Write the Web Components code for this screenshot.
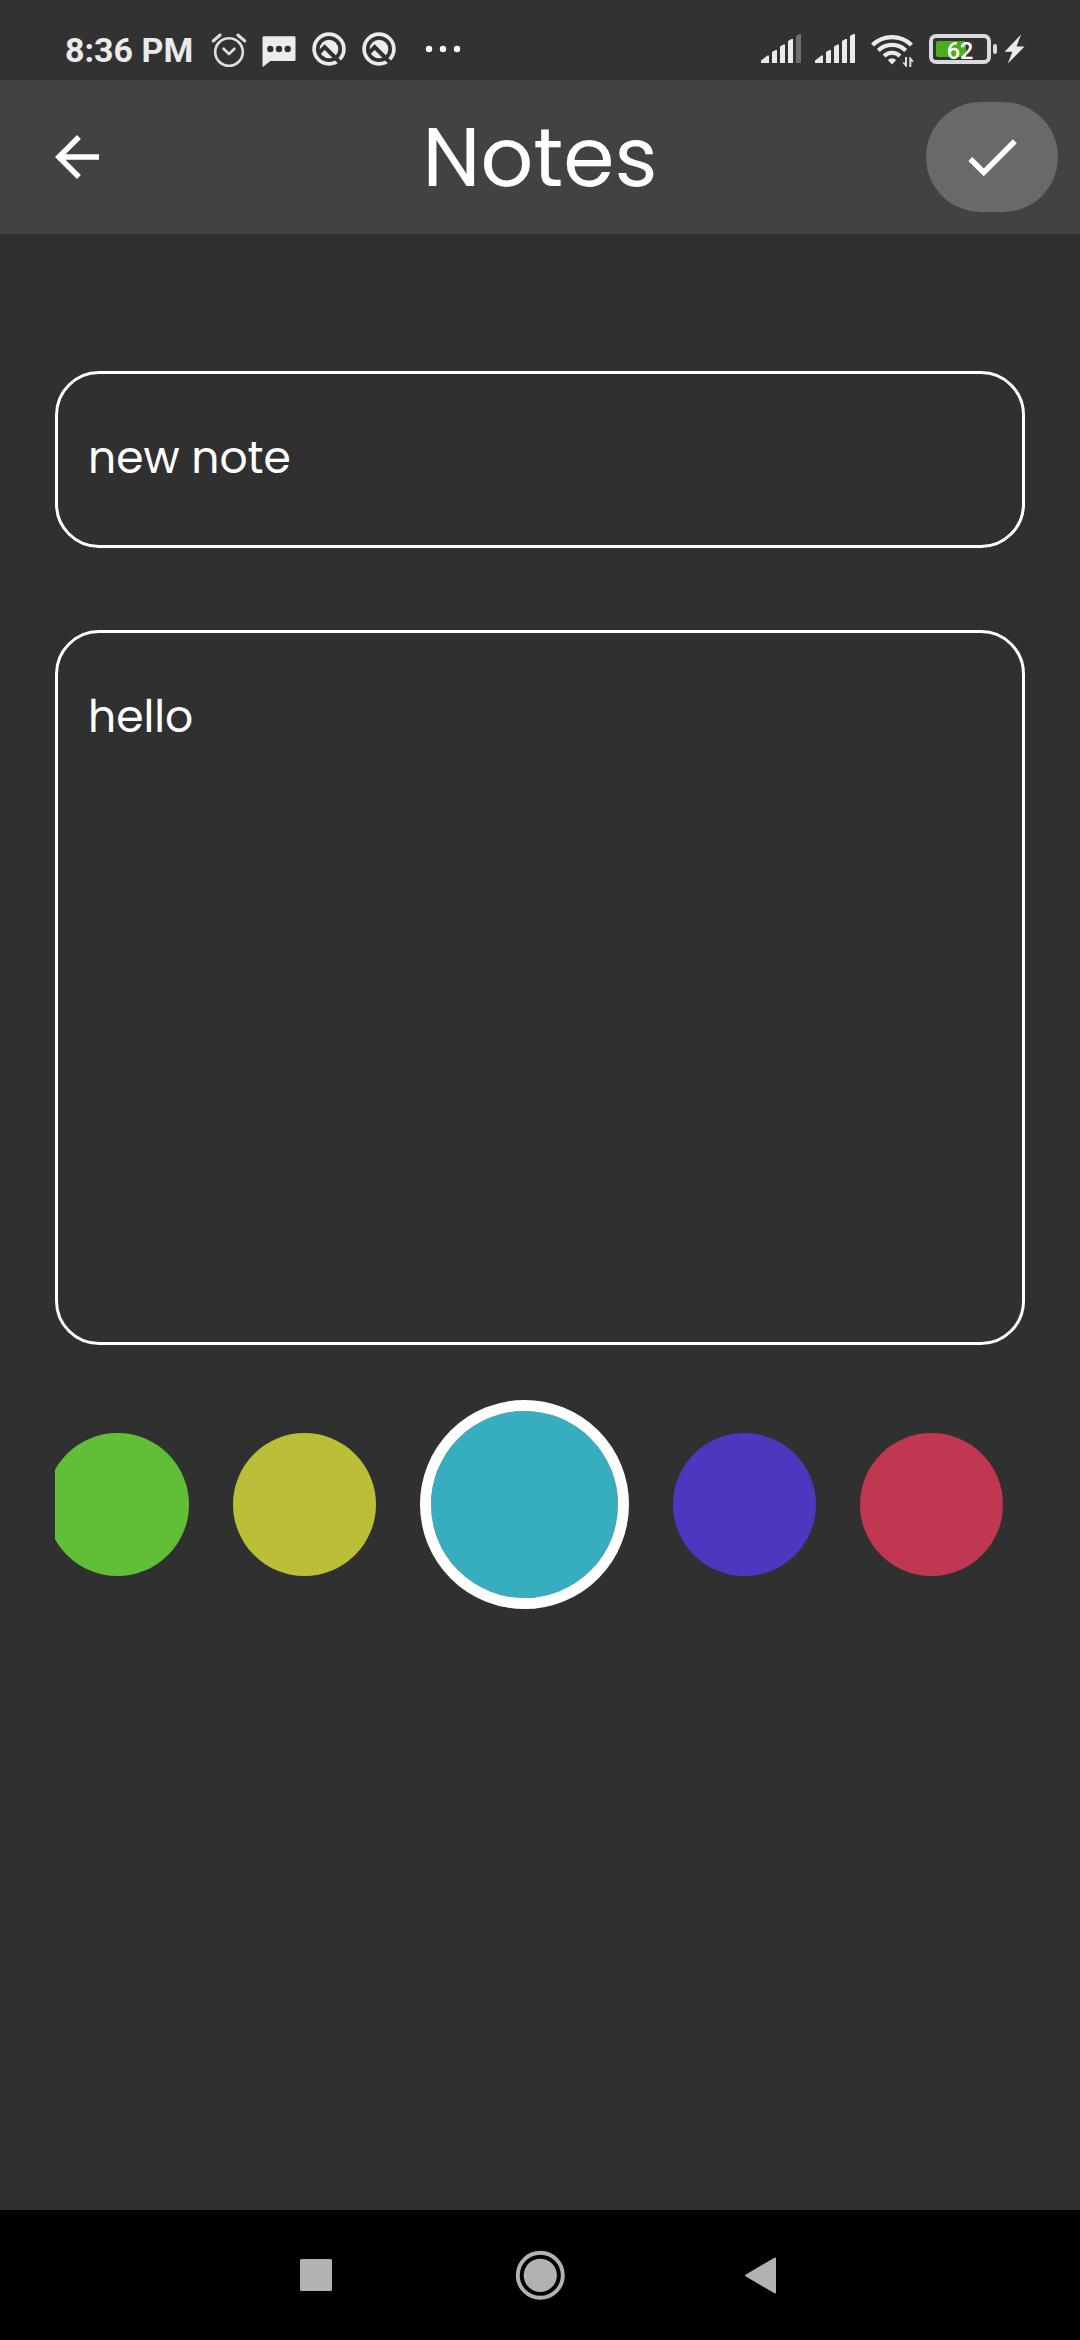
<!DOCTYPE html>
<html lang="en">
<head>
<meta charset="utf-8">
<title>Notes</title>
<style>
html,body{margin:0;padding:0;background:#303030}
</style>
</head>
<body>
<notes-screen></notes-screen>
<script>
const define = (name, html) => customElements.define(name, class extends HTMLElement {
  constructor() {
    super();
    const t = document.createElement('template');
    t.innerHTML = html;
    this.attachShadow({mode: 'open'}).append(t.content.cloneNode(true));
  }
});

define('signal-bars', `
<style>:host{display:block;width:40px;height:80px}svg{display:block}.last{fill:var(--last,#ebebeb)}</style>
<svg width="40" height="80" fill="#ebebeb">
  <path d="M0 63V60.5L6.500 55.500H8V63ZM11 63V52L14.500 50H16V63ZM19 63V46.500L22.500 44.500H24V63ZM27 63V41L30.500 39H32V63Z"/>
  <path class="last" d="M35 63V36L38.500 34H40V63Z"/>
</svg>`);

define('search-badge', `
<style>:host{display:block;width:34px;height:80px}svg{display:block}</style>
<svg width="34" height="80" fill="none">
  <circle cx="17" cy="49" r="14.9" stroke="#ebebeb" stroke-width="3.700"/>
  <circle cx="17" cy="49" r="9.300" fill="#ebebeb"/>
  <path d="M7.200 52.700L12.700 47.200L29.500 64" stroke="#303030" stroke-width="4"/>
</svg>`);

define('battery-level', `
<style>
:host{display:flex;align-items:center;gap:2px;height:30px}
.case{box-sizing:border-box;width:62px;height:30px;border:4px solid #dadada;border-radius:7px;display:grid;align-items:center;padding-left:3px}
.fill{grid-area:1/1;width:30px;height:16px;border-radius:2px;background:#4dac1a}
.num{grid-area:1/1;width:48px;text-align:center;font:500 23.5px/18px Roboto,sans-serif;padding-top:3px;color:#fff}
.cap{width:4px;height:10px;border-radius:2px;background:#dadada}
</style>
<div class="case"><div class="fill"></div><div class="num"><slot></slot></div></div><div class="cap"></div>`);

define('status-bar', `
<style>
:host{display:flex;height:80px;padding:0 55px 0 65px;background:#323232;box-sizing:border-box;align-items:flex-start}
svg{display:block;flex:none}
.time{font:700 34px/40px Roboto,sans-serif;color:#ebebeb;padding-top:30px;width:146px;white-space:nowrap}
.grow{flex:1}
signal-bars,search-badge{flex:none}
battery-level{margin:34px 7px 0 16px}
</style>
<div class="time">8:36 PM</div>
<svg width="101" height="80" viewBox="211 0 101 80" fill="none">
  <g stroke="#dedede" stroke-width="2.600" stroke-linecap="round" stroke-linejoin="round">
    <circle cx="229" cy="52" r="13.800"/>
    <path d="M223.600 48.700L229 54L234.400 48.700"/>
    <path d="M213.200 41L220.200 35M237.800 35L244.800 41" stroke-width="3"/>
  </g>
  <path d="M262.500 37.300Q262.500 36.300 263.500 36.300H294.500Q295.500 36.300 295.500 37.300V60Q295.500 61 294.500 61H270.500L263.500 66.600Q262.500 67 262.500 66Z" fill="#ebebeb"/>
  <g fill="#303030"><circle cx="270.300" cy="49" r="3.200"/><circle cx="279" cy="49" r="3.200"/><circle cx="287.700" cy="49" r="3.200"/></g>
</svg>
<search-badge></search-badge>
<svg width="16" height="80"></svg>
<search-badge></search-badge>
<svg width="70" height="80" viewBox="396 0 70 80" fill="#fff"><circle cx="429" cy="49" r="3.200"/><circle cx="443" cy="49" r="3.200"/><circle cx="457" cy="49" r="3.200"/></svg>
<div class="grow"></div>
<signal-bars style="--last:#707070;margin-right:14px"></signal-bars>
<signal-bars style="margin-right:15px"></signal-bars>
<svg width="43" height="80" viewBox="870 0 43 80" overflow="visible" fill="none">
  <g stroke="#ebebeb" stroke-width="4.200">
    <path d="M872.500 45A28 28 0 0 1 911.500 45"/>
    <path d="M878.300 50.500A19.500 19.500 0 0 1 905.700 50.500"/>
    <path d="M884 56A11.500 11.500 0 0 1 900 56"/>
  </g>
  <path d="M887.800 60Q892 56.300 896.200 60L892 64.500Z" fill="#ebebeb"/>
  <path d="M905 57H907V67H906L902.300 62.500H905ZM909.300 67V57H910.300L914 61.800H911.300V67Z" fill="#dedede"/>
</svg>
<battery-level>62</battery-level>
<svg width="21" height="80" viewBox="1004 0 21 80"><path d="M1021 34.500L1004.600 51.700H1012.400L1007.800 63.500L1024.500 46.600H1016.500Z" fill="#ebebeb"/></svg>`);

define('app-bar', `
<style>
:host{display:grid;grid-template-columns:1fr auto 1fr;align-items:center;height:154px;background:#424242;color:#fff;box-sizing:border-box;padding:0 22px 0 44px}
svg{display:block}
h1{margin:0;font:400 82.5px/110px Poppins,Inter,sans-serif;transform:translate(-11px,0)}
.ok{justify-self:end;width:132px;height:110px;border-radius:55px;background:#696969;display:grid;place-items:center}
</style>
<svg width="66" height="66" viewBox="0 0 24 24" fill="#fff"><path d="M20 11H7.830l5.590-5.590L12 4l-8 8 8 8 1.410-1.410L7.830 13H20v-2z"/></svg>
<h1><slot></slot></h1>
<div class="ok"><svg width="66" height="66" viewBox="0 0 24 24" fill="#fff"><path d="M9 16.170L4.830 12l-1.420 1.410L9 19 21 7l-1.410-1.410z"/></svg></div>`);

define('note-field', `
<style>
:host{display:block;box-sizing:border-box;height:177px;border:3px solid #fff;border-radius:44px;padding:51px 30px;color:#fff;font:400 44px/66px Poppins,Inter,sans-serif}
</style><slot></slot>`);

define('color-swatch', `
<style>
:host{display:block;flex:none;box-sizing:border-box;width:143px;height:143px;border-radius:50%;background:var(--c)}
:host([selected]){width:209px;height:209px;border:11px solid #fff;background:var(--c) padding-box}
</style>`);

define('color-strip', `
<style>
:host{display:flex;align-items:center;overflow:hidden;height:209px;gap:44px}
::slotted(:first-child){margin-left:-9px}
</style><slot></slot>`);

define('nav-bar', `
<style>:host{display:flex;height:130px;background:#000;justify-content:center}svg{display:block}</style>
<svg width="480" height="130" viewBox="300 2210 480 130" fill="#b2b2b2">
  <rect x="300" y="2259" width="32" height="32" rx="1.500"/>
  <circle cx="540.300" cy="2275.300" r="16.600"/>
  <circle cx="540.300" cy="2275.300" r="22.500" fill="none" stroke="#b2b2b2" stroke-width="3.900"/>
  <path d="M746 2275.500L775 2258.500V2292.500Z" stroke="#b2b2b2" stroke-width="2" stroke-linejoin="round"/>
</svg>`);

define('notes-screen', `
<style>
:host{display:flex;flex-direction:column;width:1080px;height:2340px;background:#303030;overflow:hidden}
main{flex:1;display:flex;flex-direction:column;padding:137px 55px 0}
.body{height:715px;margin:82px 0 55px}
</style>
<status-bar></status-bar>
<app-bar>Notes</app-bar>
<main>
  <note-field>new note</note-field>
  <note-field class="body">hello</note-field>
  <color-strip>
    <color-swatch style="--c:#61bf37"></color-swatch>
    <color-swatch style="--c:#babf37"></color-swatch>
    <color-swatch selected style="--c:#37aebf"></color-swatch>
    <color-swatch style="--c:#4c37bf"></color-swatch>
    <color-swatch style="--c:#bf3751"></color-swatch>
  </color-strip>
</main>
<nav-bar></nav-bar>`);
</script>
</body>
</html>
